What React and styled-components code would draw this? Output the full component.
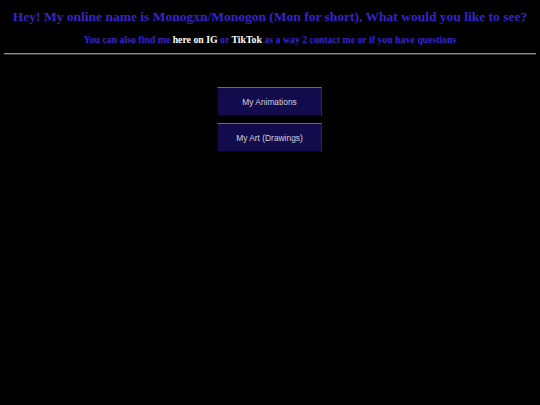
import React from 'react';
import styled, { createGlobalStyle } from 'styled-components';

const GlobalStyle = createGlobalStyle`
  html, body {
    margin: 0;
    background: #000;
  }
  body {
    padding: 4px;
    font-family: "Liberation Serif", "Times New Roman", serif;
  }
`;

const Header = styled.header`
  text-align: center;
  padding-top: 4px;
`;

const Title = styled.h1`
  margin: 0;
  font-size: 13.5px;
  line-height: 17px;
  font-weight: bold;
  color: #3724cc;
`;

const Subtitle = styled.p`
  margin: 9px 0 0;
  font-size: 9.8px;
  line-height: 12px;
  font-weight: bold;
  color: #3724cc;
`;

const Link = styled.a`
  color: #fff;
  text-decoration: none;
`;

const Rule = styled.hr`
  margin: 7px 0 0;
  border: none;
  border-top: 1px solid #8a8a8a;
  border-bottom: 1px solid #3a3a3a;
`;

const Menu = styled.nav`
  display: flex;
  flex-direction: column;
  align-items: center;
  gap: 7px;
  margin-top: 32px;
  padding-right: 1px;
`;

const MenuButton = styled.button`
  width: 105px;
  height: 29px;
  background: #120c4c;
  color: #d0d0e0;
  font-family: "Liberation Sans", Arial, sans-serif;
  font-size: 8.4px;
  border: 1px solid #05041a;
  border-top-color: #6a6a7a;
  border-right-color: #2a2a50;
  cursor: pointer;
`;

export default function App() {
  return (
    <>
      <GlobalStyle />
      <Header>
        <Title>Hey! My online name is Monogxn/Monogon (Mon for short), What would you like to see?</Title>
        <Subtitle>
          You can also find me <Link href="#">here on IG</Link> or <Link href="#">TikTok</Link> as a way 2 contact me or if you have questions
        </Subtitle>
      </Header>
      <Rule />
      <Menu>
        <MenuButton>My Animations</MenuButton>
        <MenuButton>My Art (Drawings)</MenuButton>
      </Menu>
    </>
  );
}
